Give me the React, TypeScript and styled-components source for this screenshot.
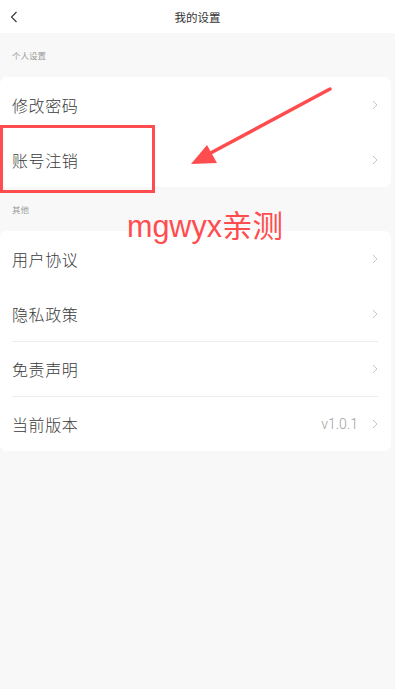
import styled, { createGlobalStyle } from 'styled-components';

const GlobalStyle = createGlobalStyle`
  html, body {
    margin: 0;
    padding: 0;
    background: #f8f8f8;
    font-family: "Noto Sans CJK SC", "Noto Sans", sans-serif;
  }
`;

const Page = styled.div`
  position: relative;
  width: 395px;
  min-height: 689px;
  background: #f8f8f8;
  overflow: hidden;
`;

const Header = styled.div`
  height: 33px;
  background: #ffffff;
  display: flex;
  align-items: center;
  justify-content: center;
  position: relative;
`;

const BackButton = styled.div`
  position: absolute;
  left: 8px;
  top: 10px;
  width: 12px;
  height: 14px;
  display: flex;
  align-items: center;
  justify-content: center;
`;

const Title = styled.span`
  font-size: 11.5px;
  color: #333333;
`;

const SectionLabel = styled.div`
  height: 44px;
  padding-left: 12px;
  display: flex;
  align-items: center;
  font-size: 8.5px;
  color: #999999;
`;

const Card = styled.div`
  margin-right: 4px;
  background: #ffffff;
  border-radius: 7px;
  padding: 0 13px 0 12px;
`;

const Row = styled.div<{ $divider?: boolean }>`
  height: 55px;
  display: flex;
  align-items: center;
  border-top: ${(p) => (p.$divider ? '1px solid #ececec' : 'none')};
  box-sizing: border-box;
`;

const RowLabel = styled.span`
  flex: 1;
  font-size: 16px;
  font-weight: 300;
  color: #3a3a3a;
  letter-spacing: 0.6px;
`;

const RowValue = styled.span`
  font-size: 14px;
  color: #a0a0a0;
  font-family: Roboto, "Noto Sans", sans-serif;
  font-weight: 300;
  margin-right: 14px;
`;

const RedBox = styled.div`
  position: absolute;
  left: 0;
  top: 125px;
  width: 155px;
  height: 68px;
  box-sizing: border-box;
  border: 3px solid #ff4c4f;
`;

const Arrow = styled.svg`
  position: absolute;
  left: 185px;
  top: 82px;
`;

const Watermark = styled.div`
  position: absolute;
  left: 127px;
  top: 208px;
  font-size: 30.5px;
  line-height: 36px;
  color: #ff4c4f;
  font-family: "Liberation Sans", "Noto Sans CJK SC", sans-serif;
`;

const Chevron = () => (
  <svg width="6" height="10" viewBox="0 0 6 10">
    <path d="M1 1 L5 5 L1 9" fill="none" stroke="#c8c8c8" strokeWidth="1" />
  </svg>
);

const firstGroup = [{ label: '修改密码' }, { label: '账号注销' }];
const secondGroup = [
  { label: '用户协议', divider: false },
  { label: '隐私政策', divider: false },
  { label: '免责声明', divider: true },
  { label: '当前版本', divider: true, value: 'v1.0.1' },
];

export default function App() {
  return (
    <Page>
      <GlobalStyle />
      <Header>
        <BackButton>
          <svg width="8" height="12" viewBox="0 0 8 12">
            <path d="M6.5 1 L1.5 6 L6.5 11" fill="none" stroke="#333" strokeWidth="1.1" />
          </svg>
        </BackButton>
        <Title>我的设置</Title>
      </Header>
      <SectionLabel>个人设置</SectionLabel>
      <Card>
        {firstGroup.map((item) => (
          <Row key={item.label}>
            <RowLabel>{item.label}</RowLabel>
            <Chevron />
          </Row>
        ))}
      </Card>
      <SectionLabel>其他</SectionLabel>
      <Card>
        {secondGroup.map((item) => (
          <Row key={item.label} $divider={item.divider}>
            <RowLabel>{item.label}</RowLabel>
            {item.value && <RowValue>{item.value}</RowValue>}
            <Chevron />
          </Row>
        ))}
      </Card>

      <RedBox />
      <Arrow width="150" height="90" viewBox="0 0 150 90">
        <line x1="145" y1="7" x2="20" y2="74" stroke="#ff4c4f" strokeWidth="3.5" strokeLinecap="round" />
        <polygon points="6,82 22,63 32,81" fill="#ff4c4f" />
      </Arrow>
      <Watermark>mgwyx亲测</Watermark>
    </Page>
  );
}
